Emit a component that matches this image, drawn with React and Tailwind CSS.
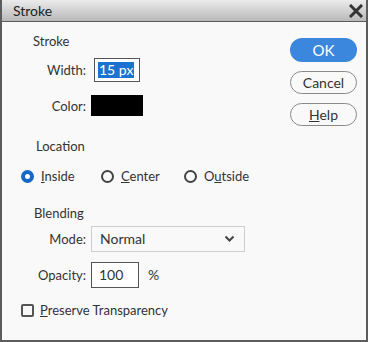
import React from 'react';

const Radio = ({ checked, children, className = '' }) => (
  <label className={`flex items-center gap-[7px] ${className}`}>
    {checked ? (
      <span className="flex h-[13px] w-[13px] items-center justify-center rounded-full bg-[#1668c8]">
        <span className="h-[5px] w-[5px] rounded-full bg-white" />
      </span>
    ) : (
      <span className="h-[13px] w-[13px] rounded-full border-2 border-[#444]" />
    )}
    <span>{children}</span>
  </label>
);

const Row = ({ label, children, className = '' }) => (
  <div className={`flex items-center ${className}`}>
    <span className="w-[85px] pr-[1px] text-right">{label}</span>
    {children}
  </div>
);

const App = () => {
  return (
    <div
      className="flex h-[342px] w-[368px] flex-col border-x-2 border-b-2 border-[#5c5c5c] bg-[#f9f9f9] text-[13px] leading-4 text-[#333]"
      style={{ fontFamily: 'Lato, "Noto Sans", sans-serif' }}
    >
      {/* Title bar */}
      <div className="flex h-[22px] shrink-0 items-center justify-between border-b border-[#5c5c5c] bg-gradient-to-b from-[#ebebeb] to-[#b9b9b9] pl-[11px] pr-[3px]">
        <span className="text-[14px] text-[#222]">Stroke</span>
        <svg width="14" height="14" viewBox="0 0 14 14">
          <path d="M2 2 L12 12 M12 2 L2 12" stroke="#333" strokeWidth="3" strokeLinecap="square" />
        </svg>
      </div>

      {/* Body */}
      <div className="flex flex-1">
        <div className="flex-1 pt-[11px]">
          <div className="pl-[31px]">Stroke</div>
          <Row label="Width:" className="mt-[9px]">
            <div className="ml-[7px] flex h-[24px] w-[46px] items-center border border-[#555] bg-white pl-[3px]">
              <span className="bg-[#1a73d0] px-[1px] text-[14px] text-white">15 px</span>
            </div>
          </Row>
          <Row label="Color:" className="mt-[13px]">
            <div className="ml-[4px] h-[21px] w-[52px] bg-black" />
          </Row>

          <div className="mt-[22px] pl-[34px]">Location</div>
          <div className="mt-[14px] flex items-center pl-[19px]">
            <Radio checked className="w-[80px]">
              <span className="underline">I</span>nside
            </Radio>
            <Radio className="w-[83px]">
              <span className="underline">C</span>enter
            </Radio>
            <Radio>
              O<span className="underline">u</span>tside
            </Radio>
          </div>

          <div className="mt-[21px] pl-[32px]">Blending</div>
          <Row label="Mode:" className="mt-[5px]">
            <div className="ml-[4px] flex h-[26px] w-[154px] items-center justify-between border border-[#cfcfcf] pl-[8px] pr-[9px]">
              <span className="text-[14px]">Normal</span>
              <svg width="11" height="8" viewBox="0 0 11 8">
                <path d="M1.5 1.5 L5.5 5.5 L9.5 1.5" fill="none" stroke="#444" strokeWidth="2" />
              </svg>
            </div>
          </Row>
          <Row label="Opacity:" className="mt-[10px]">
            <div className="ml-[4px] flex h-[26px] w-[48px] items-center border border-[#555] bg-white pl-[7px] text-[14px]">
              100
            </div>
            <span className="ml-[9px] text-[14px]">%</span>
          </Row>

          <label className="mt-[14px] flex items-center gap-[6px] pl-[19px]">
            <span className="h-[13px] w-[13px] rounded-[2px] border-2 border-[#555]" />
            <span>
              <span className="underline">P</span>reserve Transparency
            </span>
          </label>
        </div>

        {/* Buttons */}
        <div className="flex w-[76px] flex-col gap-[9px] pt-[16px]">
          <button className="h-[24px] w-[67px] rounded-full bg-[#3b87dd] text-[15px] text-white">OK</button>
          <button className="h-[23px] w-[67px] rounded-full border border-[#8a8a8a] text-[14px]">Cancel</button>
          <button className="h-[23px] w-[67px] rounded-full border border-[#8a8a8a] text-[14px]">
            <span className="underline">H</span>elp
          </button>
        </div>
      </div>
    </div>
  );
};

export default App;
